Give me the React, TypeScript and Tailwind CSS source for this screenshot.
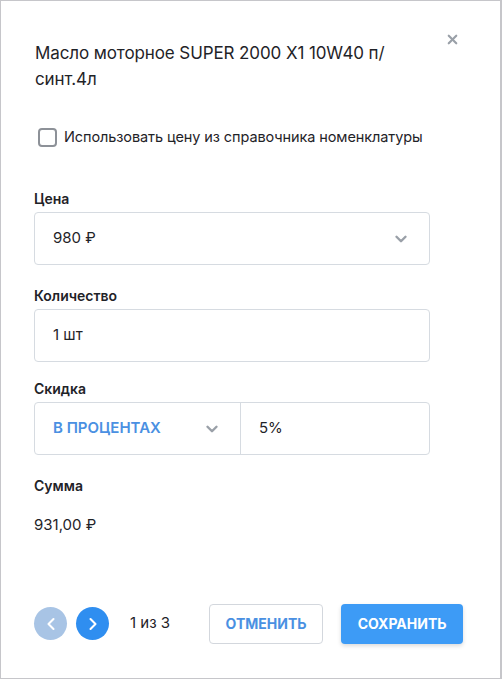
import { ChevronDown, ChevronLeft, ChevronRight, X } from 'lucide-react'

const font = { fontFamily: 'Inter, "Open Sans", Arial, sans-serif' }

function Label({ children }: { children: React.ReactNode }) {
  return <p className="text-[14px] font-semibold leading-[18px] text-[#1f2328] mb-[4px]">{children}</p>
}

export default function App() {
  return (
    <div className="w-[502px] h-[679px] bg-white border border-r-2 border-[#c6c6ca] relative text-[#1f2328]" style={font}>
      <button className="absolute right-[40px] top-[31px] text-[#9aa0a8]">
        <X size={15} strokeWidth={3.5} />
      </button>

      <div className="pl-[34px] pt-[39px]">
        <h1 className="text-[17px] leading-[26px] font-normal tracking-[-0.1px] pr-[70px]">
          Масло моторное SUPER 2000 X1 10W40 п/ синт.4л
        </h1>

        <label className="flex items-center gap-[7px] mt-[35px] ml-[3px]">
          <span className="w-[19px] h-[19px] rounded-[4px] border-2 border-[#8d9198] shrink-0" />
          <span className="text-[14.5px] leading-[20px] whitespace-nowrap tracking-[-0.1px]">Использовать цену из справочника номенклатуры</span>
        </label>
      </div>

      <div className="pl-[33px] w-[429px] mt-[43px]">
        <Label>Цена</Label>
        <div className="h-[53px] border border-[#d6dbe1] rounded-[4px] flex items-center justify-between pl-[18px] pr-[19px]">
          <span className="text-[15px]">980 ₽</span>
          <ChevronDown size={18} strokeWidth={3.2} className="text-[#9aa0a8]" />
        </div>

        <div className="mt-[22px]">
          <Label>Количество</Label>
          <div className="h-[53px] border border-[#d6dbe1] rounded-[4px] flex items-center pl-[18px]">
            <span className="text-[15px]">1 шт</span>
          </div>
        </div>

        <div className="mt-[18px]">
          <Label>Скидка</Label>
          <div className="h-[53px] border border-[#d6dbe1] rounded-[4px] flex">
            <div className="w-[206px] flex items-center justify-between pl-[18px] pr-[19px] border-r border-[#d6dbe1]">
              <span className="text-[15px] font-semibold text-[#4a90e2]">В ПРОЦЕНТАХ</span>
              <ChevronDown size={18} strokeWidth={3.2} className="text-[#9aa0a8]" />
            </div>
            <div className="flex items-center pl-[18px]">
              <span className="text-[15px]">5%</span>
            </div>
          </div>
        </div>

        <div className="mt-[22px]">
          <Label>Сумма</Label>
          <p className="text-[15px] mt-[19px]">931,00 ₽</p>
        </div>
      </div>

      <div className="flex items-center pl-[33px] mt-[67px]">
        <button className="w-[33px] h-[33px] rounded-full bg-[#a8c4e5] flex items-center justify-center text-white">
          <ChevronLeft size={20} strokeWidth={2.5} />
        </button>
        <button className="w-[33px] h-[33px] rounded-full bg-[#2f8ef0] flex items-center justify-center text-white ml-[9px]">
          <ChevronRight size={20} strokeWidth={2.5} />
        </button>
        <span className="text-[15px] ml-[21px]">1 из 3</span>
        <button className="ml-[39px] w-[114px] h-[40px] border border-[#d3d7dd] rounded-[4px] text-[14px] font-bold text-[#4a90e2]">
          ОТМЕНИТЬ
        </button>
        <button className="ml-[18px] w-[122px] h-[40px] rounded-[4px] bg-[#3d9bf6] text-[14px] font-bold text-white shadow-[0_2px_4px_rgba(0,0,0,0.15)]">
          СОХРАНИТЬ
        </button>
      </div>
    </div>
  )
}
